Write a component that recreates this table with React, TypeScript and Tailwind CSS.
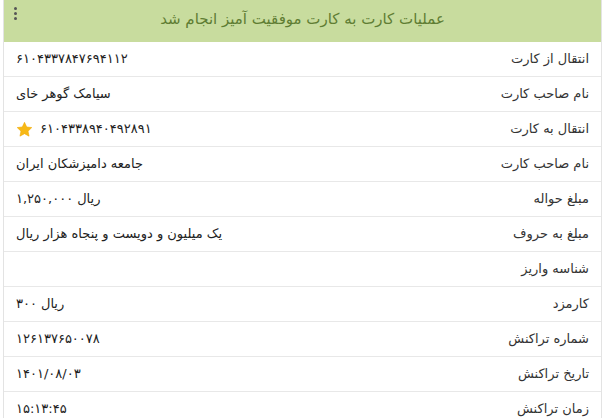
import React from "react";

type Row = { label: string; value: string; unit?: boolean; star?: boolean };

const rows: Row[] = [
  { label: "انتقال از کارت", value: "۶۱۰۴۳۳۷۸۴۷۶۹۴۱۱۲" },
  { label: "نام صاحب کارت", value: "سیامک گوهر خای" },
  { label: "انتقال به کارت", value: "۶۱۰۴۳۳۸۹۴۰۴۹۲۸۹۱", star: true },
  { label: "نام صاحب کارت", value: "جامعه دامپزشکان ایران" },
  { label: "مبلغ حواله", value: "۱,۲۵۰,۰۰۰", unit: true },
  { label: "مبلغ به حروف", value: "یک میلیون و دویست و پنجاه هزار ریال" },
  { label: "شناسه واریز", value: "" },
  { label: "کارمزد", value: "۳۰۰", unit: true },
  { label: "شماره تراکنش", value: "۱۲۶۱۳۷۶۵۰۰۷۸" },
  { label: "تاریخ تراکنش", value: "۱۴۰۱/۰۸/۰۳" },
  { label: "زمان تراکنش", value: "۱۵:۱۳:۴۵" },
];

function Star() {
  return (
    <svg width="17" height="17" viewBox="0 0 24 24" className="mr-[3px]">
      <path
        d="M12 1.8l3.1 6.6 7.2.9-5.3 5 1.4 7.1L12 17.9l-6.4 3.5 1.4-7.1-5.3-5 7.2-.9z"
        fill="#f7b916"
        stroke="#f2a900"
        strokeWidth="0.8"
        strokeLinejoin="round"
      />
    </svg>
  );
}

export default function App() {
  return (
    <div
      className="w-[609px] h-[418px] overflow-hidden bg-white pl-[3px] pr-[7px]"
      style={{ fontFamily: '"DejaVu Sans", sans-serif' }}
    >
      <div className="border-x border-[#e3e3e3]">
        <div className="relative h-[42px] bg-[#c8dc9e] flex items-center justify-center">
          <div className="absolute left-[10px] top-[7px] flex flex-col gap-[2px]">
            <span className="block w-[3px] h-[3px] bg-[#555] rounded-full" />
            <span className="block w-[3px] h-[3px] bg-[#555] rounded-full" />
            <span className="block w-[3px] h-[3px] bg-[#555] rounded-full" />
          </div>
          <div dir="rtl" className="text-[15px] text-[#5f7d33] mt-[-3px]">
            عملیات کارت به کارت موفقیت آمیز انجام شد
          </div>
        </div>
        {rows.map((r, i) => (
          <div
            key={i}
            dir="rtl"
            className="h-[35px] flex items-center justify-between px-[12px] border-b border-[#e8e8e8] text-[13px] text-[#333]"
          >
            <span>{r.label}</span>
            <span dir="ltr" className="flex items-center gap-[4px] text-[#222]">
              {r.star && <Star />}
              <span>{r.value}</span>
              {r.unit && <span dir="rtl">ریال</span>}
            </span>
          </div>
        ))}
      </div>
    </div>
  );
}
